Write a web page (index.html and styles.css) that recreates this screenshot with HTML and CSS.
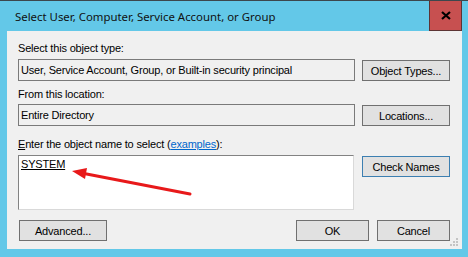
FILE: index.html
```html
<!DOCTYPE html>
<html>
  <head>
    <meta charset="utf-8" />
    <title>Select User, Computer, Service Account, or Group</title>
    <link rel="stylesheet" href="styles.css">
  </head>
  <body>
    <div class="titlebar">
      <div class="title">Select User, Computer, Service Account, or Group</div>
      <div class="close">
        <svg width="10" height="9" viewBox="0 0 10 9">
          <path d="M1 1 L9 8 M9 1 L1 8" stroke="#000" stroke-width="2.2" />
        </svg>
      </div>
    </div>
    <div class="client">
      <div class="label">Select this object type:</div>
      <div class="row">
        <div class="textbox">User, Service Account, Group, or Built-in security principal</div>
        <button class="btn">Object Types...</button>
      </div>
      <div class="label second">From this location:</div>
      <div class="row tight">
        <div class="textbox">Entire Directory</div>
        <button class="btn">Locations...</button>
      </div>
      <div class="label third"><u>E</u>nter the object name to select (<a href="#">examples</a>):</div>
      <div class="row">
        <div class="names">
          <u>SYSTEM</u>
          <svg class="arrow" width="200" height="60" viewBox="0 0 200 60">
            <line x1="172" y1="39" x2="66" y2="18.5" stroke="#e8191a" stroke-width="3" stroke-linecap="round" />
            <polygon points="54,16 69,13 67,24" fill="#e8191a" />
          </svg>
        </div>
        <button class="btn default">Check Names</button>
      </div>
      <div class="footer">
        <button class="btn advanced">Advanced...</button>
        <div class="spacer"></div>
        <button class="btn small">OK</button>
        <button class="btn small">Cancel</button>
      </div>
      <svg class="grip" width="9" height="9" viewBox="0 0 9 9">
        <rect x="6" y="0" width="2" height="2" fill="#c4c4c4" />
        <rect x="6" y="3" width="2" height="2" fill="#c4c4c4" />
        <rect x="3" y="3" width="2" height="2" fill="#c4c4c4" />
        <rect x="6" y="6" width="2" height="2" fill="#c4c4c4" />
        <rect x="3" y="6" width="2" height="2" fill="#c4c4c4" />
        <rect x="0" y="6" width="2" height="2" fill="#c4c4c4" />
      </svg>
    </div>
  </body>
</html>
```

FILE: styles.css
```css
body {
  margin: 0;
  width: 468px;
  height: 257px;
  background-color: #63c8e8;
  font-family: "Liberation Sans", Arial, sans-serif;
  font-size: 11px;
  letter-spacing: -0.18px;
  color: #000;
  overflow: hidden;
}
.titlebar {
  display: flex;
  height: 31px;
  box-sizing: border-box;
  border-top: 1px solid #3c474d;
}
.title {
  padding: 9px 0 0 15px;
  font-family: "Noto Sans", sans-serif;
  font-size: 11.4px;
  letter-spacing: 0;
  line-height: 14px;
  color: #111;
}
.close {
  margin-left: auto;
  margin-right: 6px;
  width: 33px;
  height: 30px;
  box-sizing: border-box;
  background-color: #c75050;
  border: 1px solid #5c3434;
  border-top: 0;
  display: flex;
  align-items: center;
  justify-content: center;
}
.client {
  position: relative;
  margin-left: 7px;
  width: 455px;
  height: 218px;
  box-sizing: border-box;
  padding: 11px 12px 8px 11px;
  background-color: #f0f0f0;
}
.label {
  height: 13px;
  line-height: 13px;
}
.second {
  margin-top: 7px;
}
.third {
  margin-top: 12px;
}
.label a {
  color: #0066cc;
}
.row {
  display: flex;
  gap: 7px;
  margin-top: 4px;
}
.tight {
  margin-top: 3px;
}
.textbox {
  width: 337px;
  height: 22px;
  box-sizing: border-box;
  border: 1px solid #7a7a7a;
  padding: 0 0 0 2px;
  line-height: 20px;
}
.names {
  position: relative;
  width: 336px;
  height: 55px;
  box-sizing: border-box;
  background-color: #fff;
  border: 1px solid;
  border-color: #828282 #d9d9d9 #d9d9d9 #828282;
  padding: 2px 0 0 2px;
  line-height: 13px;
}
.arrow {
  position: absolute;
  left: -1px;
  top: -1px;
}
.btn {
  width: 88px;
  height: 21px;
  margin-top: 1px;
  box-sizing: border-box;
  background-color: #e1e1e1;
  border: 1px solid #707070;
  border-radius: 0;
  padding: 0;
  font-family: "Liberation Sans", Arial, sans-serif;
  font-size: 11px;
  letter-spacing: -0.18px;
  color: #000;
}
.default {
  border-color: #3c7fb1;
  margin-left: 1px;
}
.footer {
  display: flex;
  gap: 8px;
  margin-top: 10px;
}
.footer .btn {
  margin-top: 0;
}
.advanced {
  margin-left: 1px;
}
.spacer {
  flex: 1;
}
.small {
  width: 73px;
}
.grip {
  position: absolute;
  right: 3px;
  bottom: 2px;
}
```
